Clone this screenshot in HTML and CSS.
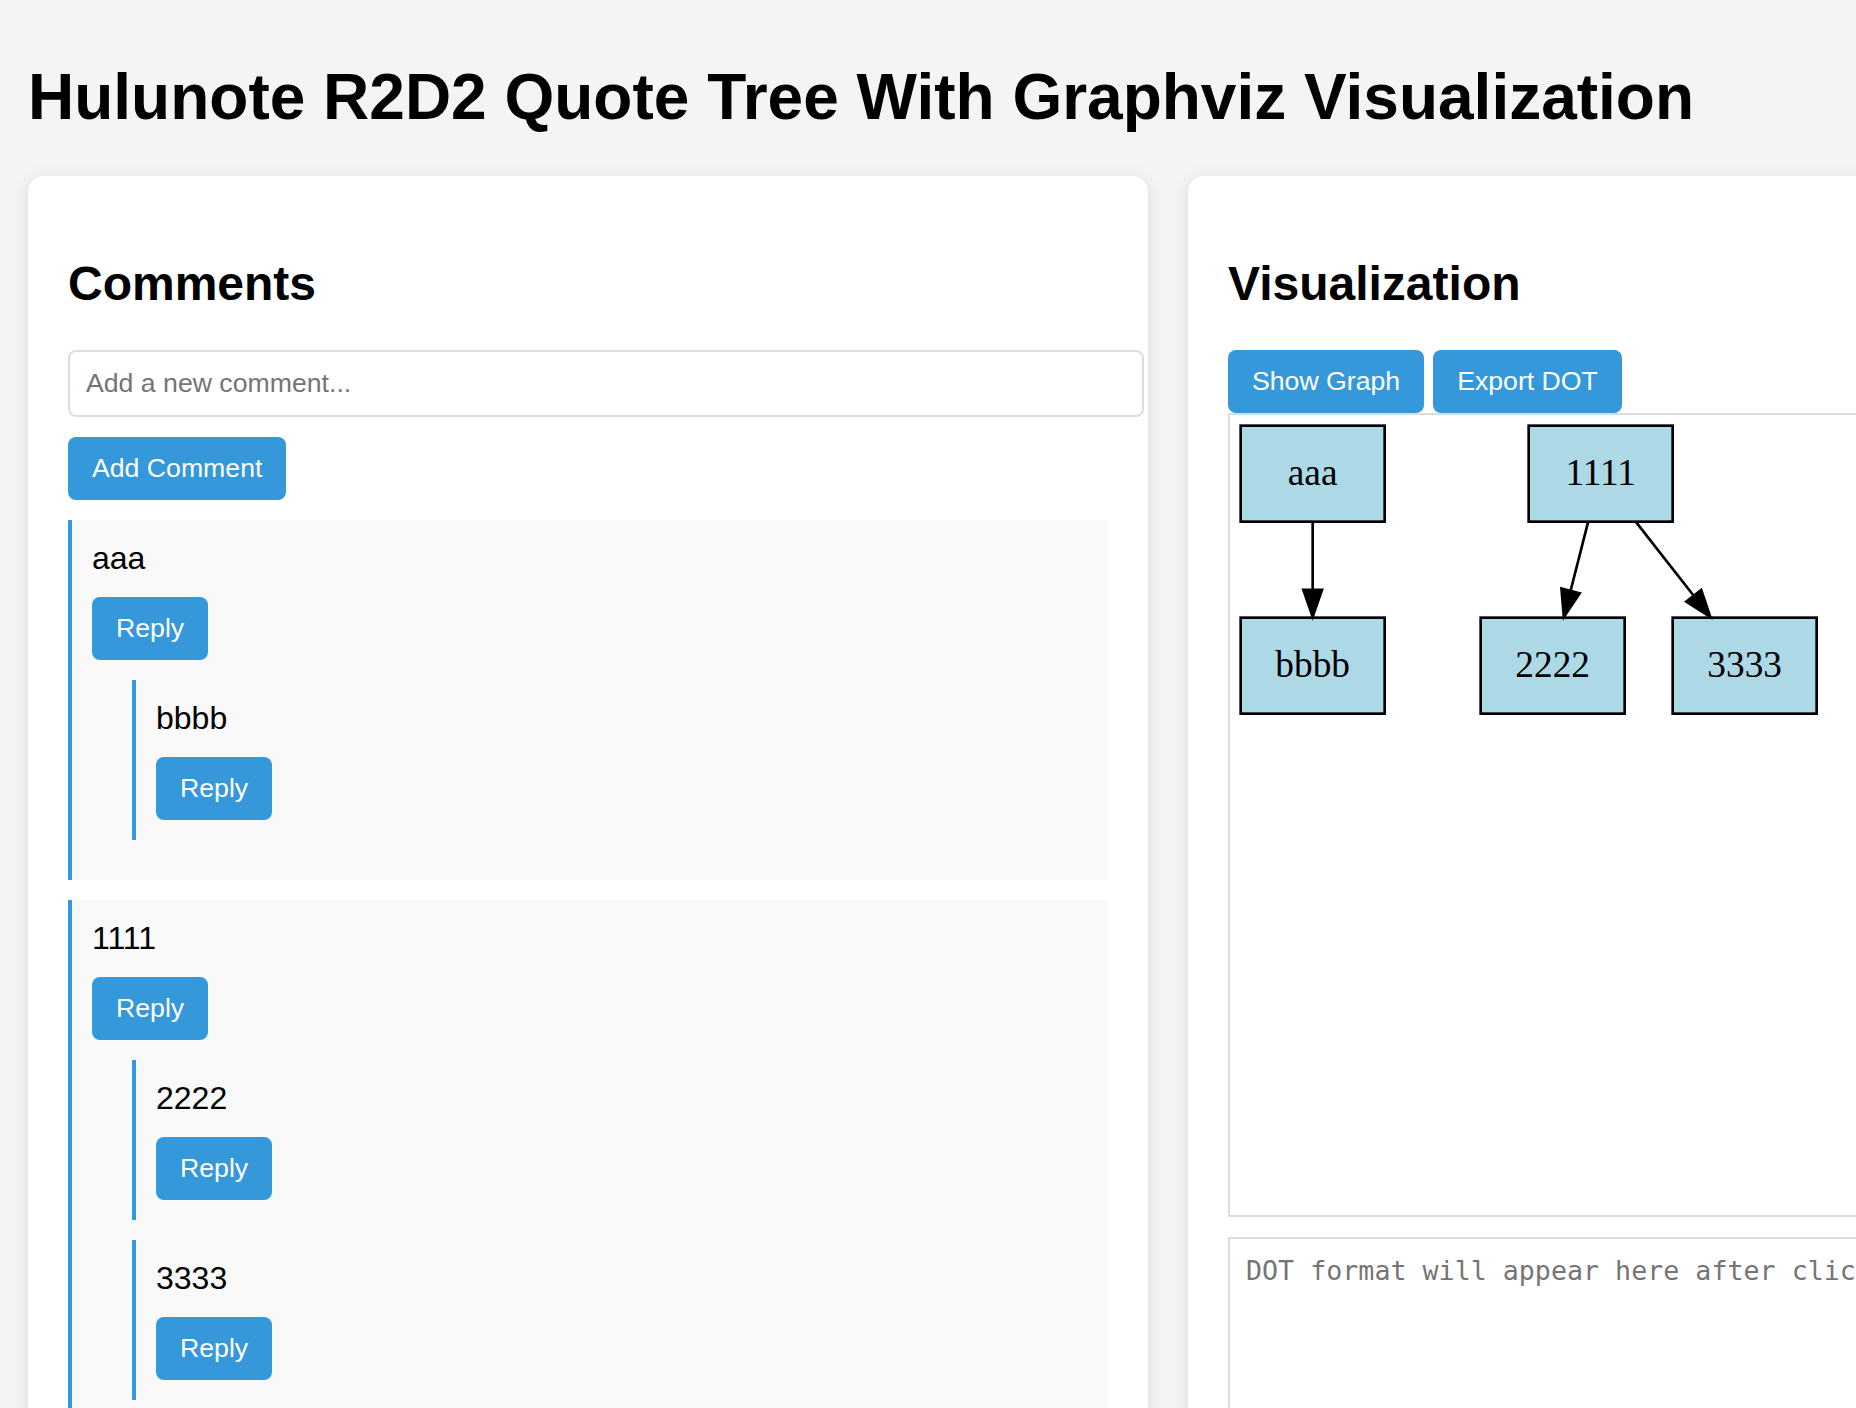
FILE: index.html
```html
<!DOCTYPE html>
<html lang="en">
<head>
<meta charset="utf-8">
<title>Hulunote R2D2 Quote Tree With Graphviz Visualization</title>
<link rel="stylesheet" href="styles.css">
</head>
<body>
  <h1 class="page-title">Hulunote R2D2 Quote Tree With Graphviz Visualization</h1>
  <div class="columns">
    <section class="card">
      <h2 class="card-title">Comments</h2>
      <input class="comment-input" type="text" placeholder="Add a new comment...">
      <button class="btn">Add Comment</button>
      <div class="comment">
        <div class="comment-text">aaa</div>
        <button class="btn">Reply</button>
        <div class="comment">
          <div class="comment-text">bbbb</div>
          <button class="btn">Reply</button>
        </div>
      </div>
      <div class="comment">
        <div class="comment-text">1111</div>
        <button class="btn">Reply</button>
        <div class="comment">
          <div class="comment-text">2222</div>
          <button class="btn">Reply</button>
        </div>
        <div class="comment">
          <div class="comment-text">3333</div>
          <button class="btn">Reply</button>
        </div>
      </div>
    </section>
    <section class="card">
      <h2 class="card-title">Visualization</h2>
      <div class="actions">
        <button class="btn">Show Graph</button>
        <button class="btn">Export DOT</button>
      </div>
      <div class="graph">
        <svg class="graph-svg" width="597.33" height="309.33" viewBox="0 0 224 116" xmlns="http://www.w3.org/2000/svg">
          <g class="node">
            <rect x="4" y="4" width="54" height="36" fill="#add8e6" stroke="#000" stroke-width="1"/>
            <text x="31" y="26.2" text-anchor="middle" font-family="Liberation Serif, Times New Roman, serif" font-size="14">aaa</text>
          </g>
          <g class="node">
            <rect x="112" y="4" width="54" height="36" fill="#add8e6" stroke="#000" stroke-width="1"/>
            <text x="139" y="26.2" text-anchor="middle" font-family="Liberation Serif, Times New Roman, serif" font-size="14">1111</text>
          </g>
          <g class="node">
            <rect x="4" y="76" width="54" height="36" fill="#add8e6" stroke="#000" stroke-width="1"/>
            <text x="31" y="98.2" text-anchor="middle" font-family="Liberation Serif, Times New Roman, serif" font-size="14">bbbb</text>
          </g>
          <g class="node">
            <rect x="94" y="76" width="54" height="36" fill="#add8e6" stroke="#000" stroke-width="1"/>
            <text x="121" y="98.2" text-anchor="middle" font-family="Liberation Serif, Times New Roman, serif" font-size="14">2222</text>
          </g>
          <g class="node">
            <rect x="166" y="76" width="54" height="36" fill="#add8e6" stroke="#000" stroke-width="1"/>
            <text x="193" y="98.2" text-anchor="middle" font-family="Liberation Serif, Times New Roman, serif" font-size="14">3333</text>
          </g>
          <g class="edge">
            <path d="M31,40 L31,65.6" fill="none" stroke="#000" stroke-width="1"/>
            <polygon points="34.5,65.6 31,75.6 27.5,65.6" fill="#000" stroke="#000" stroke-width="1"/>
          </g>
          <g class="edge">
            <path d="M134.3,40.1 L127.7,66" fill="none" stroke="#000" stroke-width="1"/>
            <polygon points="131.1,66.9 125.2,75.7 124.3,65.1" fill="#000" stroke="#000" stroke-width="1"/>
          </g>
          <g class="edge">
            <path d="M152.2,40.1 L173.9,67.8" fill="none" stroke="#000" stroke-width="1"/>
            <polygon points="176.7,65.6 180.1,75.7 171.1,70" fill="#000" stroke="#000" stroke-width="1"/>
          </g>
        </svg>
      </div>
      <textarea class="dot-output" placeholder="DOT format will appear here after clicking Export DOT"></textarea>
    </section>
  </div>
</body>
</html>
```

FILE: styles.css
```css
html {
  overflow: hidden;
}

body {
  margin: 0;
  padding: 60px 28px;
  background: #f4f4f4;
  font-family: "Liberation Sans", Arial, Helvetica, sans-serif;
  color: #000;
}

.page-title {
  font-size: 64px;
  font-weight: bold;
  line-height: normal;
  margin: 0 0 42px;
}

.columns {
  display: grid;
  grid-template-columns: 1120px 1120px;
  gap: 40px;
  align-items: start;
}

.card {
  background: #fff;
  border-radius: 16px;
  padding: 40px;
  box-shadow: 0 4px 20px rgba(0, 0, 0, 0.1);
}

.card-title {
  font-size: 48px;
  font-weight: bold;
  line-height: normal;
  margin: 40px 0 39px;
}

.comment-input {
  display: block;
  width: 100%;
  box-sizing: content-box;
  margin: 0 0 20px;
  padding: 16px;
  border: 2px solid #ddd;
  border-radius: 8px;
  font-family: "Liberation Sans", Arial, sans-serif;
  font-size: 26.67px;
  line-height: normal;
  color: #000;
  background: #fff;
}

.comment-input::placeholder {
  color: #757575;
}

.btn {
  display: block;
  margin: 0;
  padding: 16px 24px;
  border: none;
  border-radius: 8px;
  background: #3498db;
  color: #fff;
  font-family: "Liberation Sans", Arial, sans-serif;
  font-size: 26.67px;
  line-height: normal;
}

.comment {
  margin: 20px 0;
  padding: 20px;
  border-left: 4px solid #3498db;
  background: #f9f9f9;
}

.comment .comment {
  margin-left: 40px;
}

.comment-text {
  font-size: 32px;
  line-height: normal;
  margin-bottom: 20px;
}

.actions {
  display: flex;
  gap: 9px;
}

.graph {
  height: 800px;
  border: 2px solid #ddd;
  background: #fff;
}

.graph-svg {
  display: block;
}

.dot-output {
  display: block;
  width: 100%;
  height: 400px;
  box-sizing: content-box;
  margin: 20px 0 0;
  padding: 16px;
  border: 2px solid #ddd;
  border-radius: 0;
  font-family: "DejaVu Sans Mono", Menlo, monospace;
  font-size: 26.67px;
  line-height: normal;
  resize: none;
  background: #fff;
}

.dot-output::placeholder {
  color: #757575;
}
```
